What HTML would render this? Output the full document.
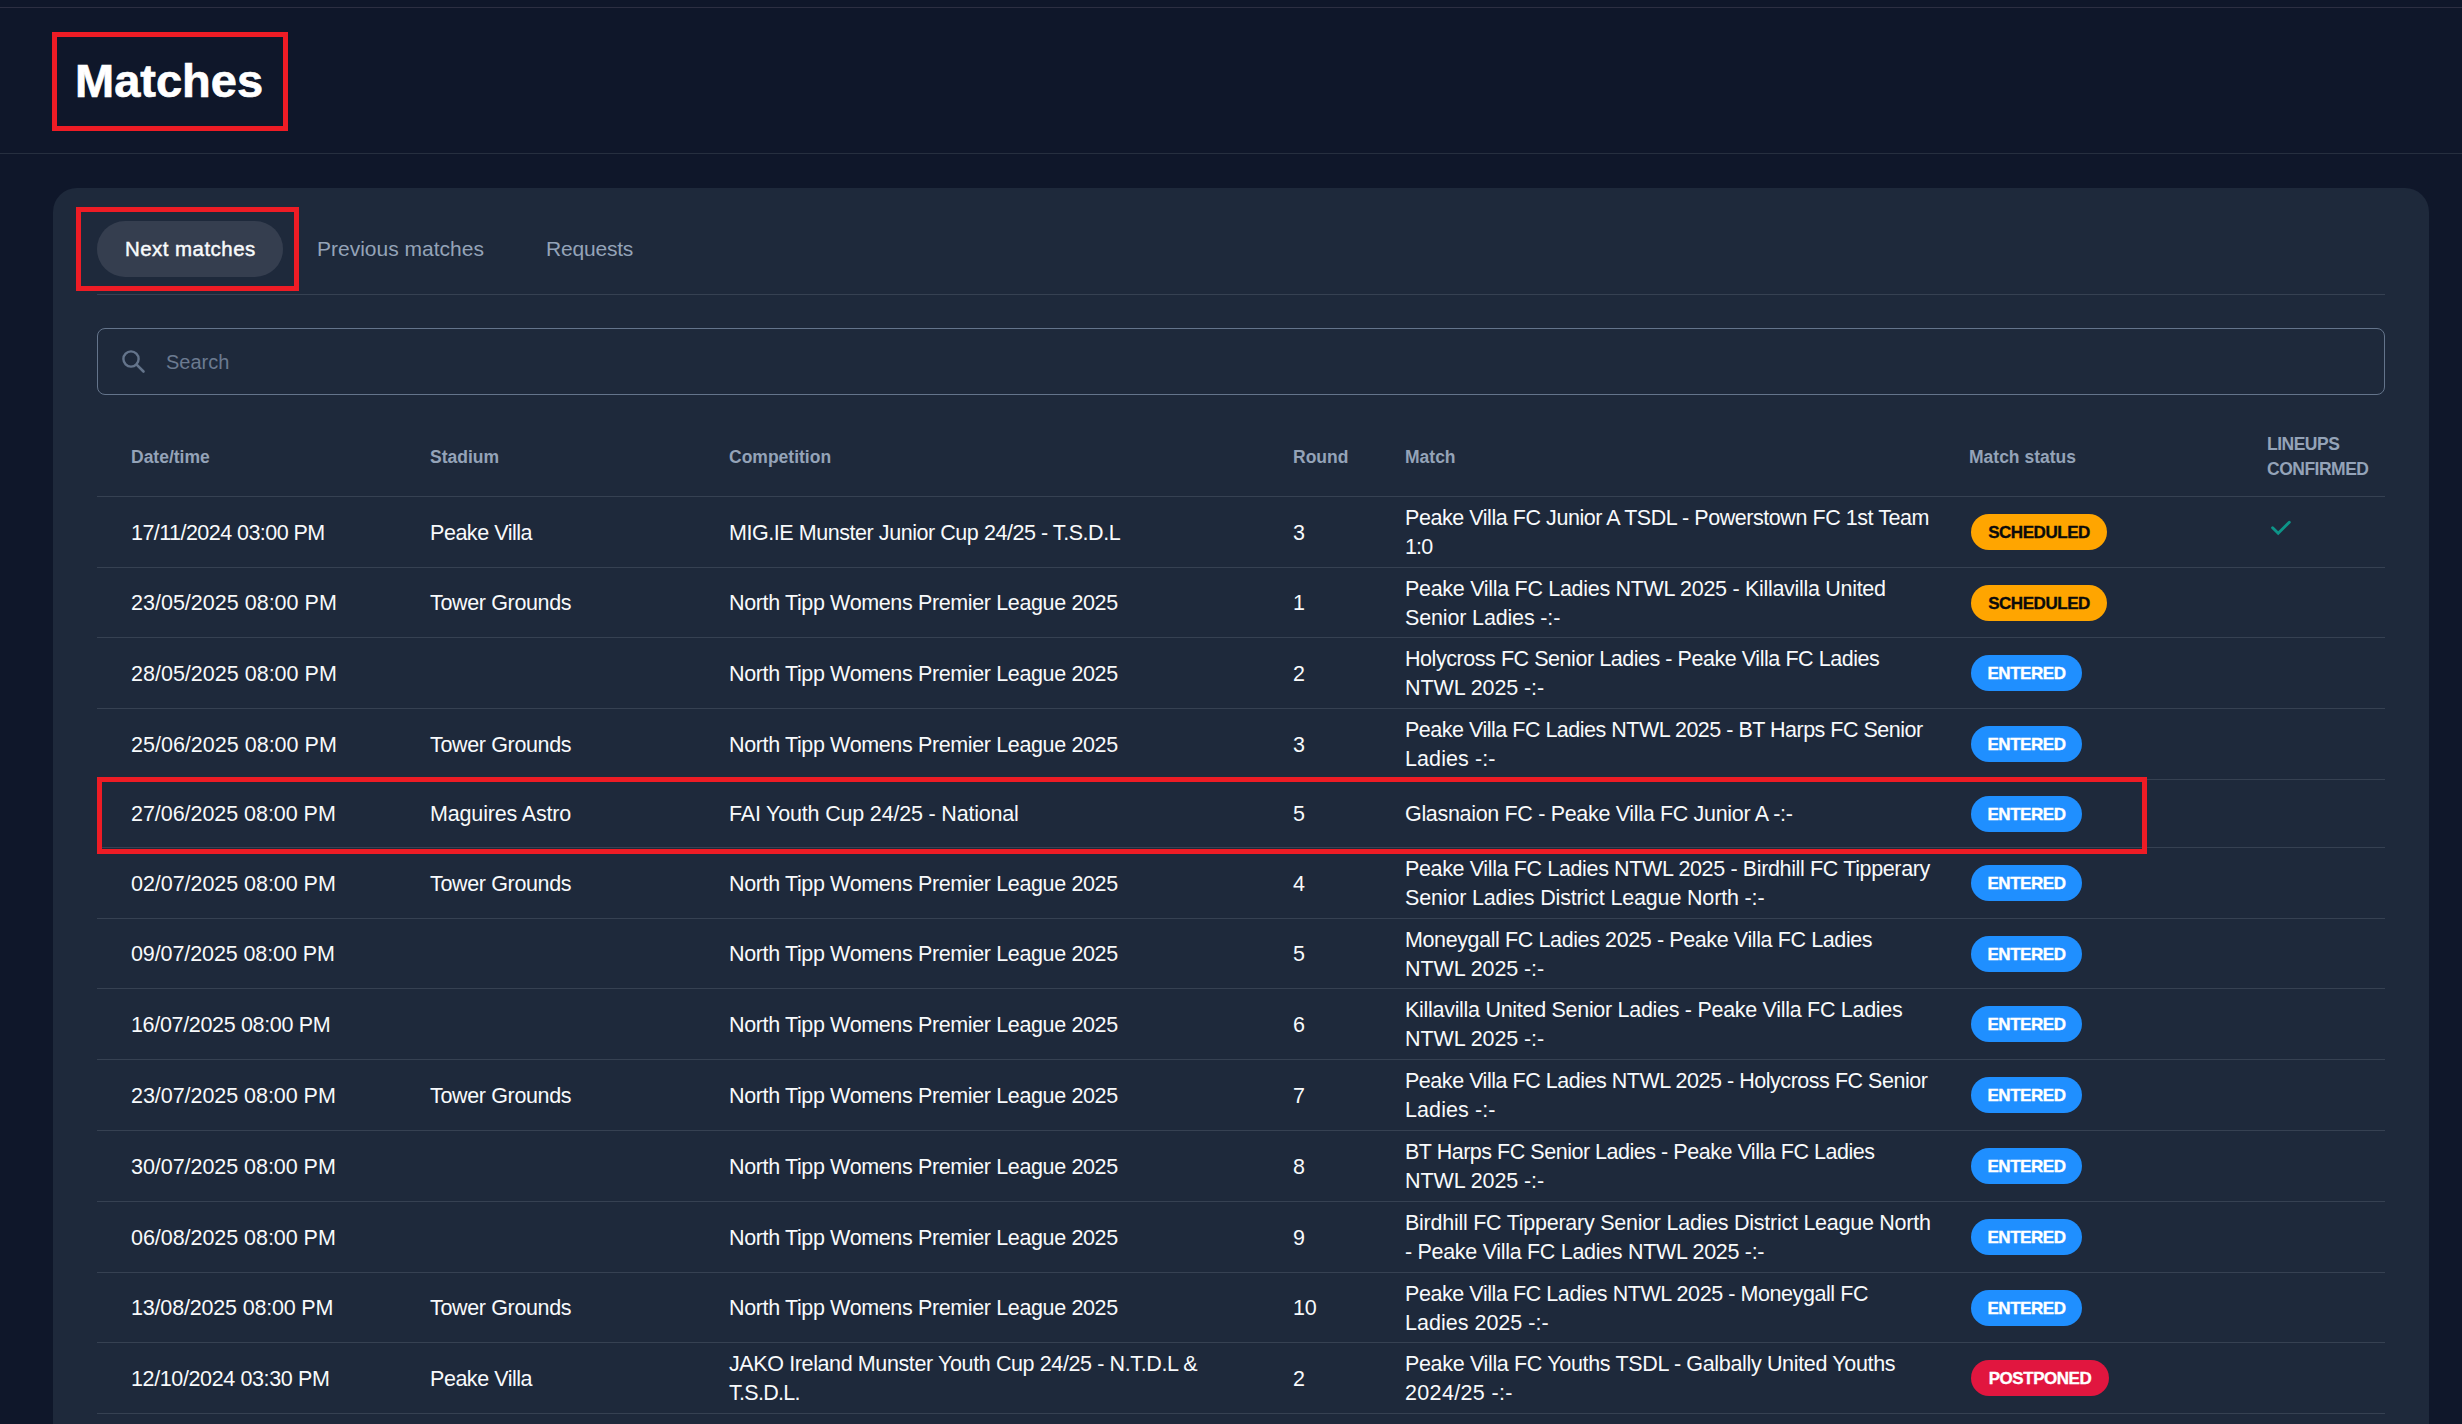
<!DOCTYPE html>
<html>
<head>
<meta charset="utf-8">
<style>
*{box-sizing:border-box;margin:0;padding:0}
html,body{width:2462px;height:1424px;overflow:hidden;background:#0f172a;font-family:"Liberation Sans",sans-serif;color:#f8fafc}
.abs{position:absolute}
.topline{left:0;top:7px;width:2462px;height:1px;background:#2c2f42}
.hdrline{left:0;top:153px;width:2462px;height:1px;background:#262f3f}
.redbox{border:5px solid #ee1c25}
.title{left:75px;top:56px;font-size:47px;font-weight:bold;line-height:50px;color:#fff;letter-spacing:0px;-webkit-text-stroke:0.7px #fff}
.card{left:53px;top:188px;width:2376px;height:1300px;background:#1e293b;border-radius:24px}
.pill{left:97px;top:221px;width:186px;height:56px;border-radius:28px;background:#353e4f}
.tab{font-size:21px;line-height:24px;color:#94a3b8;top:237px}
.tabline{left:97px;top:294px;width:2288px;height:1px;background:#364152}
.search{left:97px;top:328px;width:2288px;height:67px;border:1px solid #64748b;border-radius:8px}
.stext{left:166px;top:350px;font-size:20px;line-height:24px;color:#6b7a90}
.th{font-size:17.5px;font-weight:bold;color:#94a3b8;line-height:25px}
.hline{left:97px;width:2288px;height:1px;background:#364152}
.row{position:absolute;left:97px;width:2288px;display:flex;align-items:center}
.chk{position:absolute;left:2172px;top:22px}
.c{position:absolute;transform:translateY(1px);font-size:21.5px;letter-spacing:-0.1px;line-height:29px;white-space:nowrap;color:#f8fafc}
.badge{position:absolute;left:1874px;height:36px;border-radius:18px;font-size:17px;font-weight:bold;line-height:37px;text-align:center;letter-spacing:-0.45px;-webkit-text-stroke:0.35px currentColor}
.sch{background:#ffa500;color:#0b0b0b;width:136px}
.ent{background:#1f8fff;color:#fff;width:111px}
.pst{background:#e1163f;color:#fff;width:138px}
</style>
</head>
<body>
<div class="abs topline"></div>
<div class="abs hdrline"></div>
<div class="abs redbox" style="left:52px;top:32px;width:236px;height:99px"></div>
<div class="abs title">Matches</div>

<div class="abs card"></div>
<div class="abs pill"></div>
<div class="abs redbox" style="left:76px;top:207px;width:223px;height:84px"></div>
<div class="abs tab" style="left:125px;color:#f8fafc;font-size:20.5px;-webkit-text-stroke:0.45px #f8fafc;letter-spacing:0.45px">Next matches</div>
<div class="abs tab" style="left:317px">Previous matches</div>
<div class="abs tab" style="left:546px;letter-spacing:-0.2px">Requests</div>
<div class="abs tabline"></div>

<div class="abs search"></div>
<svg class="abs" style="left:118px;top:345px" width="32" height="32" viewBox="0 0 32 32">
  <circle cx="13" cy="14" r="7.6" fill="none" stroke="#64748b" stroke-width="2.4"/>
  <line x1="18.6" y1="19.6" x2="25.5" y2="26.5" stroke="#64748b" stroke-width="2.6" stroke-linecap="round"/>
</svg>
<div class="abs stext">Search</div>

<!-- table header -->
<div class="abs th" style="left:131px;top:445px">Date/time</div>
<div class="abs th" style="left:430px;top:445px">Stadium</div>
<div class="abs th" style="left:729px;top:445px">Competition</div>
<div class="abs th" style="left:1293px;top:445px">Round</div>
<div class="abs th" style="left:1405px;top:445px">Match</div>
<div class="abs th" style="left:1969px;top:445px">Match status</div>
<div class="abs th" style="left:2267px;top:432px;letter-spacing:-0.5px">LINEUPS<br>CONFIRMED</div>
<div class="abs hline" style="top:496px"></div>

<div class="row" style="top:497px;height:70px">
<div class="c" style="left:34px"><div id="t0-0-0" style="letter-spacing:-0.545px">17/11/2024 03:00 PM</div></div>
<div class="c" style="left:333px"><div id="t0-1-0" style="letter-spacing:-0.460px">Peake Villa</div></div>
<div class="c" style="left:632px"><div id="t0-2-0" style="letter-spacing:-0.445px">MIG.IE Munster Junior Cup 24/25 - T.S.D.L</div></div>
<div class="c" style="left:1196px"><div id="t0-3-0">3</div></div>
<div class="c" style="left:1308px"><div id="t0-4-0" style="letter-spacing:-0.446px">Peake Villa FC Junior A TSDL - Powerstown FC 1st Team</div><div id="t0-4-1" style="letter-spacing:-0.900px">1:0</div></div>
<div class="badge sch">SCHEDULED</div>
<svg class="chk" width="24" height="18" viewBox="0 0 24 18"><path d="M3.6 8.8 L9.2 14.3 L20.3 3.2" fill="none" stroke="#0d9488" stroke-width="2.9" stroke-linecap="round"/></svg>
</div>
<div class="abs hline" style="top:567px"></div>
<div class="row" style="top:568px;height:69px">
<div class="c" style="left:34px"><div id="t1-0-0" style="letter-spacing:0.011px">23/05/2025 08:00 PM</div></div>
<div class="c" style="left:333px"><div id="t1-1-0" style="letter-spacing:-0.350px">Tower Grounds</div></div>
<div class="c" style="left:632px"><div id="t1-2-0" style="letter-spacing:-0.368px">North Tipp Womens Premier League 2025</div></div>
<div class="c" style="left:1196px"><div id="t1-3-0">1</div></div>
<div class="c" style="left:1308px"><div id="t1-4-0" style="letter-spacing:-0.300px">Peake Villa FC Ladies NTWL 2025 - Killavilla United</div><div id="t1-4-1" style="letter-spacing:-0.150px">Senior Ladies -:-</div></div>
<div class="badge sch">SCHEDULED</div>
</div>
<div class="abs hline" style="top:637px"></div>
<div class="row" style="top:638px;height:70px">
<div class="c" style="left:34px"><div id="t2-0-0" style="letter-spacing:0.011px">28/05/2025 08:00 PM</div></div>
<div class="c" style="left:632px"><div id="t2-2-0" style="letter-spacing:-0.368px">North Tipp Womens Premier League 2025</div></div>
<div class="c" style="left:1196px"><div id="t2-3-0">2</div></div>
<div class="c" style="left:1308px"><div id="t2-4-0" style="letter-spacing:-0.447px">Holycross FC Senior Ladies - Peake Villa FC Ladies</div><div id="t2-4-1" style="letter-spacing:-0.084px">NTWL 2025 -:-</div></div>
<div class="badge ent">ENTERED</div>
</div>
<div class="abs hline" style="top:708px"></div>
<div class="row" style="top:709px;height:70px">
<div class="c" style="left:34px"><div id="t3-0-0" style="letter-spacing:0.011px">25/06/2025 08:00 PM</div></div>
<div class="c" style="left:333px"><div id="t3-1-0" style="letter-spacing:-0.350px">Tower Grounds</div></div>
<div class="c" style="left:632px"><div id="t3-2-0" style="letter-spacing:-0.368px">North Tipp Womens Premier League 2025</div></div>
<div class="c" style="left:1196px"><div id="t3-3-0">3</div></div>
<div class="c" style="left:1308px"><div id="t3-4-0" style="letter-spacing:-0.492px">Peake Villa FC Ladies NTWL 2025 - BT Harps FC Senior</div><div id="t3-4-1" style="letter-spacing:0.101px">Ladies -:-</div></div>
<div class="badge ent">ENTERED</div>
</div>
<div class="abs hline" style="top:779px"></div>
<div class="row" style="top:780px;height:67px">
<div class="c" style="left:34px"><div id="t4-0-0" style="letter-spacing:-0.044px">27/06/2025 08:00 PM</div></div>
<div class="c" style="left:333px"><div id="t4-1-0" style="letter-spacing:-0.161px">Maguires Astro</div></div>
<div class="c" style="left:632px"><div id="t4-2-0" style="letter-spacing:-0.185px">FAI Youth Cup 24/25 - National</div></div>
<div class="c" style="left:1196px"><div id="t4-3-0">5</div></div>
<div class="c" style="left:1308px"><div id="t4-4-0" style="letter-spacing:-0.324px">Glasnaion FC - Peake Villa FC Junior A -:-</div></div>
<div class="badge ent">ENTERED</div>
</div>
<div class="abs hline" style="top:847px"></div>
<div class="row" style="top:848px;height:70px">
<div class="c" style="left:34px"><div id="t5-0-0" style="letter-spacing:-0.044px">02/07/2025 08:00 PM</div></div>
<div class="c" style="left:333px"><div id="t5-1-0" style="letter-spacing:-0.350px">Tower Grounds</div></div>
<div class="c" style="left:632px"><div id="t5-2-0" style="letter-spacing:-0.368px">North Tipp Womens Premier League 2025</div></div>
<div class="c" style="left:1196px"><div id="t5-3-0">4</div></div>
<div class="c" style="left:1308px"><div id="t5-4-0" style="letter-spacing:-0.363px">Peake Villa FC Ladies NTWL 2025 - Birdhill FC Tipperary</div><div id="t5-4-1" style="letter-spacing:-0.161px">Senior Ladies District League North -:-</div></div>
<div class="badge ent">ENTERED</div>
</div>
<div class="abs hline" style="top:918px"></div>
<div class="row" style="top:919px;height:69px">
<div class="c" style="left:34px"><div id="t6-0-0">09/07/2025 08:00 PM</div></div>
<div class="c" style="left:632px"><div id="t6-2-0" style="letter-spacing:-0.368px">North Tipp Womens Premier League 2025</div></div>
<div class="c" style="left:1196px"><div id="t6-3-0">5</div></div>
<div class="c" style="left:1308px"><div id="t6-4-0" style="letter-spacing:-0.392px">Moneygall FC Ladies 2025 - Peake Villa FC Ladies</div><div id="t6-4-1" style="letter-spacing:-0.084px">NTWL 2025 -:-</div></div>
<div class="badge ent">ENTERED</div>
</div>
<div class="abs hline" style="top:988px"></div>
<div class="row" style="top:989px;height:70px">
<div class="c" style="left:34px"><div id="t7-0-0" style="letter-spacing:-0.333px">16/07/2025 08:00 PM</div></div>
<div class="c" style="left:632px"><div id="t7-2-0" style="letter-spacing:-0.368px">North Tipp Womens Premier League 2025</div></div>
<div class="c" style="left:1196px"><div id="t7-3-0">6</div></div>
<div class="c" style="left:1308px"><div id="t7-4-0" style="letter-spacing:-0.292px">Killavilla United Senior Ladies - Peake Villa FC Ladies</div><div id="t7-4-1" style="letter-spacing:-0.084px">NTWL 2025 -:-</div></div>
<div class="badge ent">ENTERED</div>
</div>
<div class="abs hline" style="top:1059px"></div>
<div class="row" style="top:1060px;height:70px">
<div class="c" style="left:34px"><div id="t8-0-0" style="letter-spacing:-0.044px">23/07/2025 08:00 PM</div></div>
<div class="c" style="left:333px"><div id="t8-1-0" style="letter-spacing:-0.350px">Tower Grounds</div></div>
<div class="c" style="left:632px"><div id="t8-2-0" style="letter-spacing:-0.368px">North Tipp Womens Premier League 2025</div></div>
<div class="c" style="left:1196px"><div id="t8-3-0">7</div></div>
<div class="c" style="left:1308px"><div id="t8-4-0" style="letter-spacing:-0.468px">Peake Villa FC Ladies NTWL 2025 - Holycross FC Senior</div><div id="t8-4-1" style="letter-spacing:0.101px">Ladies -:-</div></div>
<div class="badge ent">ENTERED</div>
</div>
<div class="abs hline" style="top:1130px"></div>
<div class="row" style="top:1131px;height:70px">
<div class="c" style="left:34px"><div id="t9-0-0" style="letter-spacing:-0.044px">30/07/2025 08:00 PM</div></div>
<div class="c" style="left:632px"><div id="t9-2-0" style="letter-spacing:-0.368px">North Tipp Womens Premier League 2025</div></div>
<div class="c" style="left:1196px"><div id="t9-3-0">8</div></div>
<div class="c" style="left:1308px"><div id="t9-4-0" style="letter-spacing:-0.475px">BT Harps FC Senior Ladies - Peake Villa FC Ladies</div><div id="t9-4-1" style="letter-spacing:-0.084px">NTWL 2025 -:-</div></div>
<div class="badge ent">ENTERED</div>
</div>
<div class="abs hline" style="top:1201px"></div>
<div class="row" style="top:1202px;height:70px">
<div class="c" style="left:34px"><div id="t10-0-0" style="letter-spacing:-0.044px">06/08/2025 08:00 PM</div></div>
<div class="c" style="left:632px"><div id="t10-2-0" style="letter-spacing:-0.368px">North Tipp Womens Premier League 2025</div></div>
<div class="c" style="left:1196px"><div id="t10-3-0">9</div></div>
<div class="c" style="left:1308px"><div id="t10-4-0" style="letter-spacing:-0.254px">Birdhill FC Tipperary Senior Ladies District League North</div><div id="t10-4-1" style="letter-spacing:-0.304px">- Peake Villa FC Ladies NTWL 2025 -:-</div></div>
<div class="badge ent">ENTERED</div>
</div>
<div class="abs hline" style="top:1272px"></div>
<div class="row" style="top:1273px;height:69px">
<div class="c" style="left:34px"><div id="t11-0-0" style="letter-spacing:-0.176px">13/08/2025 08:00 PM</div></div>
<div class="c" style="left:333px"><div id="t11-1-0" style="letter-spacing:-0.350px">Tower Grounds</div></div>
<div class="c" style="left:632px"><div id="t11-2-0" style="letter-spacing:-0.368px">North Tipp Womens Premier League 2025</div></div>
<div class="c" style="left:1196px"><div id="t11-3-0">10</div></div>
<div class="c" style="left:1308px"><div id="t11-4-0" style="letter-spacing:-0.430px">Peake Villa FC Ladies NTWL 2025 - Moneygall FC</div><div id="t11-4-1" style="letter-spacing:0.014px">Ladies 2025 -:-</div></div>
<div class="badge ent">ENTERED</div>
</div>
<div class="abs hline" style="top:1342px"></div>
<div class="row" style="top:1343px;height:70px">
<div class="c" style="left:34px"><div id="t12-0-0" style="letter-spacing:-0.378px">12/10/2024 03:30 PM</div></div>
<div class="c" style="left:333px"><div id="t12-1-0" style="letter-spacing:-0.460px">Peake Villa</div></div>
<div class="c" style="left:632px"><div id="t12-2-0" style="letter-spacing:-0.385px">JAKO Ireland Munster Youth Cup 24/25 - N.T.D.L &amp;</div><div id="t12-2-1" style="letter-spacing:-0.728px">T.S.D.L.</div></div>
<div class="c" style="left:1196px"><div id="t12-3-0">2</div></div>
<div class="c" style="left:1308px"><div id="t12-4-0" style="letter-spacing:-0.340px">Peake Villa FC Youths TSDL - Galbally United Youths</div><div id="t12-4-1" style="letter-spacing:0.340px">2024/25 -:-</div></div>
<div class="badge pst">POSTPONED</div>
</div>
<div class="abs hline" style="top:1413px"></div>
<div class="abs redbox" style="left:97px;top:777px;width:2050px;height:77px"></div>
</body>
</html>
